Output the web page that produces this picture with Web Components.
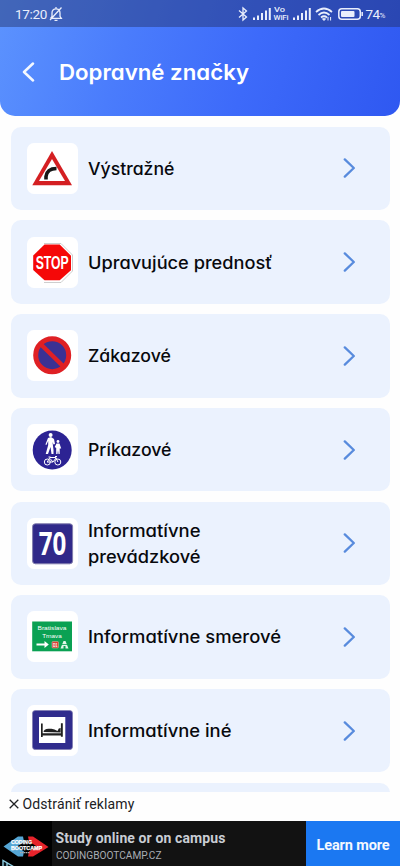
<!DOCTYPE html>
<html lang="sk"><head><meta charset="utf-8"><title>Dopravné značky</title>
<style>html,body{margin:0;height:866px;overflow:hidden;background:#fefefe}</style></head>
<body><traffic-app></traffic-app>
<script>
const define=(name,html,setup)=>customElements.define(name,class extends HTMLElement{
  connectedCallback(){if(this.shadowRoot)return;const r=this.attachShadow({mode:'open'});r.innerHTML=html;if(setup)setup(this,r);}
});

// Inline text that spans the requested width, by tracking or (with "stretch") by widening its glyphs
define('fit-text',`<style>:host{display:block;white-space:nowrap}span{display:inline-block;transform-origin:0 50%}</style><span></span>`,(h,r)=>{
  const s=r.querySelector('span');s.textContent=h.getAttribute('text');
  const w=+h.getAttribute('w'),n=s.textContent.length,now=s.getBoundingClientRect().width;
  if(h.hasAttribute('stretch'))s.style.transform=`scaleX(${w/now})`;
  else s.style.letterSpacing=((w-now)/n)+'px';
});

define('status-bar',`<style>
:host{display:flex;height:27px;box-sizing:border-box;background:rgba(33,45,95,.43);color:#e9eefc;font:13.5px Roboto,sans-serif;align-items:center;padding:0 15px}
svg{display:block;flex:none}.sp{flex:1}.vo{font:500 8px/8px Roboto,sans-serif;margin:0 4px 0 3px}.pc{font-size:8px;padding-top:4px}
</style>
<fit-text text="17:20" w="32"></fit-text>
<svg width="14" height="16" viewBox="0 0 14 16" style="margin-left:2px" fill="none" stroke="#e9eefc" stroke-width="1.3"><path d="M2 12.3h10.3L11 10.4V7c0-2.4-1.6-4.2-4-4.2S3 4.600 3 7v3.400L1.600 12.300M7 1v1.800M5.500 14.300h3M1 14L12.500 1.500"/></svg>
<span class="sp"></span>
<svg width="10" height="16" viewBox="0 0 10 16" fill="none" stroke="#e9eefc" stroke-width="1.3"><path d="M1 4.500l7.500 6.500L5 14V2l3.500 3L1 11.500"/></svg>
<svg width="18" height="12" viewBox="0 0 18 12" style="margin-left:5px" fill="#e9eefc"><path d="M0 9.500h2V12H0zM4 7.500h2V12H4zM8 5h2v7H8zM12 2.500h2V12h-2zM15.800 0h2v12h-2z"/></svg>
<div class="vo"><fit-text text="Vo" w="11" stretch></fit-text><fit-text text="WiFi" w="15"></fit-text></div>
<svg width="18" height="12" viewBox="0 0 18 12" fill="#e9eefc"><path d="M0 9.500h2V12H0zM4 7.500h2V12H4zM8 5h2v7H8zM12 2.500h2V12h-2zM15.800 0h2v12h-2z"/></svg>
<svg width="18" height="14" viewBox="0 0 18 14" style="margin-left:4px" fill="none" stroke="#e9eefc" stroke-width="1.700"><path d="M1 5Q9-2 17 5M3.500 8Q9 3 14.500 8M6 10.500Q9 8 12 10.500"/><path d="M7.500 11.800h3L9 13.500zM13 10v3.500M15.600 10v3.500" fill="#e9eefc" stroke-width="1"/></svg>
<svg width="26" height="12" viewBox="0 0 26 12" style="margin-left:5px"><rect x=".8" y=".8" width="21.500" height="10.400" rx="3" fill="none" stroke="#e9eefc" stroke-width="1.500"/><rect x="3" y="3" width="13.500" height="6" rx="1" fill="#e9eefc"/><path d="M24.200 4v4" stroke="#e9eefc" stroke-width="1.500"/></svg>
<fit-text text="74" w="14" style="margin-left:2px"></fit-text><fit-text class="pc" text="%" w="5.500"></fit-text>`);

define('app-header',`<style>
:host{display:block;height:116px;border-radius:0 0 15px 15px;overflow:hidden;background:linear-gradient(108deg,#5c93fe 0%,#4a7cfc 32%,#3d6afa 62%,#2f58f1 100%)}
.row{display:flex;height:90px;align-items:center;color:#fff;font:600 21.500px/30px Inter,sans-serif;font-feature-settings:"cv11"}
svg{margin-left:22px;margin-right:24px;flex:none}
</style><status-bar></status-bar><div class="row"><svg width="13" height="20" viewBox="0 0 13 20" fill="none" stroke="#f4f8ff" stroke-width="2.500" stroke-linecap="round" stroke-linejoin="round"><path d="M11 1.500L2 10l9 8.500"/></svg><fit-text text="Dopravné značky" w="190" stretch></fit-text></div>`);

const svgText=(x,y,size,w,t,extra='')=>`<text x="${x}" y="${y}" font-size="${size}" textLength="${w}" lengthAdjust="spacingAndGlyphs" text-anchor="middle" fill="#fff" ${extra}>${t}</text>`;
const narrow=(x,y,size,k,t,extra)=>`<text transform="translate(${x} ${y}) scale(${k} 1)" font-size="${size}" text-anchor="middle" fill="#fff" ${extra}>${t}</text>`;
const signs={
 bend:`<path d="M25 8L45 42.300H5.300z" fill="#d41f22"/><path d="M25 16L38 38H12z" fill="#fff"/><path d="M19 36.500v-3q1-8 10.500-8" fill="none" stroke="#171717" stroke-width="3.600"/>`,
 stop:`<path d="M17 6.500h17L45.500 18v16L34 45.500H17" fill="none" stroke="#b9b9b9" stroke-width=".7"/><path d="M17.500 7.400h15.200L44 18.700v14.600L32.700 43.300H17.500L6.200 33V18.500z" fill="#f50808"/>${narrow(25.2,31.700,17.500,.7,'STOP','font-family="Liberation Sans" font-weight="700"')}`,
 parking:`<circle cx="25.200" cy="25.200" r="16.500" fill="#3b3193" stroke="#df2024" stroke-width="5"/><path d="M13 13.500l24.500 24" stroke="#df2024" stroke-width="4.500"/>`,
 walk:`<circle cx="25.200" cy="26" r="19.500" fill="#2c2393"/><g fill="#fff"><circle cx="23.600" cy="11" r="2"/><path d="M21 14l3-1 3 2 1 5-1.500.500-1-2.500 1 8v4h-2l-1-7-2.500 7h-2.300l2.500-9V17l-1.800 4-1-.5z"/><circle cx="31" cy="17.500" r="1.400"/><path d="M29.500 19.400h3l1.700 5h-1.500v5.500h-1.200L31 26l-.500 4h-1.300v-6l-1.500-1z"/></g><g fill="none" stroke="#fff" stroke-width="1"><circle cx="20.300" cy="38" r="3"/><circle cx="30.800" cy="38" r="3"/><path d="M20.300 38l2.600-4.500h6l2 4.500M23 34.500l3 3.500 3-4M26 38h-6M28 32.500h2M21.500 33h2"/></g>`,
 speed:`<rect x="5.600" y="5.800" width="40" height="40" rx="2.800" fill="#302989" stroke="#807cad" stroke-width="1"/>${narrow(25.500,37.300,33,.73,'70','font-family="Open Sans" font-weight="700"')}`,
 route:`<rect x="5.200" y="10.500" width="39.800" height="29.800" fill="#0aa153"/>${svgText(25,19,6.200,29,'Bratislava','font-family="Liberation Sans"')}${svgText(25,26.500,6.200,19.500,'Trnava','font-family="Liberation Sans"')}<path d="M9.500 32.600h8v-2.500l4.300 3.500-4.300 3.500v-2.500h-8z" fill="#fff"/><rect x="25" y="30.500" width="6.500" height="6.500" rx="1" fill="#d84035" stroke="#e2bda8" stroke-width=".5"/>${svgText(28.300,35.500,4.500,4.500,'D1','font-family="Liberation Sans" font-weight="700"')}<path d="M36.500 30h2l3 7.600h-3V35h-2v2.600h-3z" fill="#e2f6e9"/><path d="M34 33.500h7" stroke="#0aa153" stroke-width=".8"/>`,
 bed:`<rect x="5.500" y="5.500" width="40" height="39" rx="2.800" fill="#302c8d" stroke="#7b78ad" stroke-width=".7"/><rect x="12" y="12" width="26.300" height="26" fill="#fff"/><path d="M14 18.600h1.700v9.600h18.200V18.300h1.900v13.400h-1.900v-1.300H15.700v1.500H14zM16.500 27q.2-3 5-3.300h3q3 .2 6 2.200l1.300-2.400 1.800-.5v4.500z" fill="#202020"/>`
};

define('sign-card',`<style>
:host{display:flex;height:83.400px;flex:none;box-sizing:border-box;align-items:center;padding:0 34px 0 16px;border-radius:10px;background:#ebf2fe;color:#08090d;font:500 17px/25.500px Inter,sans-serif;font-feature-settings:"cv11"}
.tile{width:51px;height:51px;border-radius:7px;background:#fff;flex:none;margin-right:10px}.tile svg{display:block}.label{flex:1;padding-top:2.500px}
</style><div class="tile"></div><div class="label"></div><svg class="go" width="13" height="20" viewBox="0 0 13 20" fill="none" stroke="#588bdd" stroke-width="2.300" stroke-linecap="round" stroke-linejoin="round"><path d="M1.800 1.400L10.800 10l-9 8.600"/></svg>`,(h,r)=>{
  const k=h.getAttribute('sign');
  r.querySelector('.tile').innerHTML=`<svg width="51" height="51" viewBox="0 0 51 51">${signs[k]||''}</svg>`;
  if(!k){r.querySelector('.go').remove();return;}
  const ws=h.getAttribute('w').split(',');
  r.querySelector('.label').innerHTML=h.getAttribute('label').split('|').map((t,i)=>`<fit-text text="${t}" w="${ws[i]}" stretch></fit-text>`).join('');
});

define('sign-list',`<style>:host{display:flex;flex-direction:column;gap:10.330px;padding:10.700px 10.500px 0;overflow:hidden;box-sizing:border-box}</style><slot></slot>`);

define('remove-ads',`<style>:host{display:flex;height:29px;flex:none;box-sizing:border-box;align-items:center;padding:0 0 5px 9px;background:#fefefe;color:#202124;font:14px/20px Roboto,sans-serif}svg{margin-right:3.500px}</style>
<svg width="10" height="10" viewBox="0 0 10 10" stroke="#202124" stroke-width="1.300"><path d="M.7.7l8.600 8.600M9.300.7L.7 9.300"/></svg><fit-text text="Odstrániť reklamy" w="112"></fit-text>`);

define('ad-banner',`<style>
:host{display:flex;height:45px;flex:none;background:#121212;font-family:Roboto,sans-serif}
.logo{width:52px;background:#000;flex:none}.copy{flex:1;padding:8px 0 0 3.500px}
.t{font:700 14px/18px Roboto,sans-serif;color:#c9cdd4}.u{font:11.500px/17px Roboto,sans-serif;color:#a9adb3;margin-top:0}
.cta{width:94px;box-sizing:border-box;background:#1b78f2;color:#f5f8ff;font:700 14.500px/50px Roboto,sans-serif;padding-left:10.500px}svg{display:block}
</style><div class="logo"><svg width="52" height="45" viewBox="0 0 52 45"><path d="M3.500 25.500L18 15.500h5l1 5-7 5 7 5-1 5h-5z" fill="#55a6d5"/><path d="M48.500 26L33 15.500h-5l1 5 8 5-8 5-1 5h5z" fill="#e6232b"/>
<g font-family="Liberation Sans" font-weight="700" fill="#fff" stroke="#fff" stroke-width=".25" font-size="4.900"><text x="11" y="23.300" textLength="21" lengthAdjust="spacingAndGlyphs">CODING</text><text x="11" y="28.900" textLength="31" lengthAdjust="spacingAndGlyphs">BOOTCAMP</text></g><path d="M20 31.600h10" stroke="#aaa" stroke-width="1.200" stroke-dasharray="1.500 .5"/>
<path d="M3 45v-5.500l10.500 6M7 41.500V46" fill="#07141b" stroke="#8dcce0" stroke-width="1.400"/></svg></div>
<div class="copy"><fit-text class="t" text="Study online or on campus" w="170"></fit-text><fit-text class="u" text="CODINGBOOTCAMP.CZ" w="105.500" stretch></fit-text></div>
<div class="cta"><fit-text text="Learn more" w="73"></fit-text></div>`);

define('traffic-app',`<style>:host{display:flex;flex-direction:column;width:400px;height:866px;background:#fefefe}app-header{flex:none}sign-list{flex:1;min-height:0}</style>
<app-header></app-header>
<sign-list>
<sign-card sign="bend" label="Výstražné" w="86.500"></sign-card>
<sign-card sign="stop" label="Upravujúce prednosť" w="184.500"></sign-card>
<sign-card sign="parking" label="Zákazové" w="83"></sign-card>
<sign-card sign="walk" label="Príkazové" w="83.500"></sign-card>
<sign-card sign="speed" label="Informatívne|prevádzkové" w="112.500,112.500"></sign-card>
<sign-card sign="route" label="Informatívne smerové" w="193"></sign-card>
<sign-card sign="bed" label="Informatívne iné" w="143.500"></sign-card>
<sign-card></sign-card>
</sign-list>
<remove-ads></remove-ads><ad-banner></ad-banner>`);
</script></body></html>
